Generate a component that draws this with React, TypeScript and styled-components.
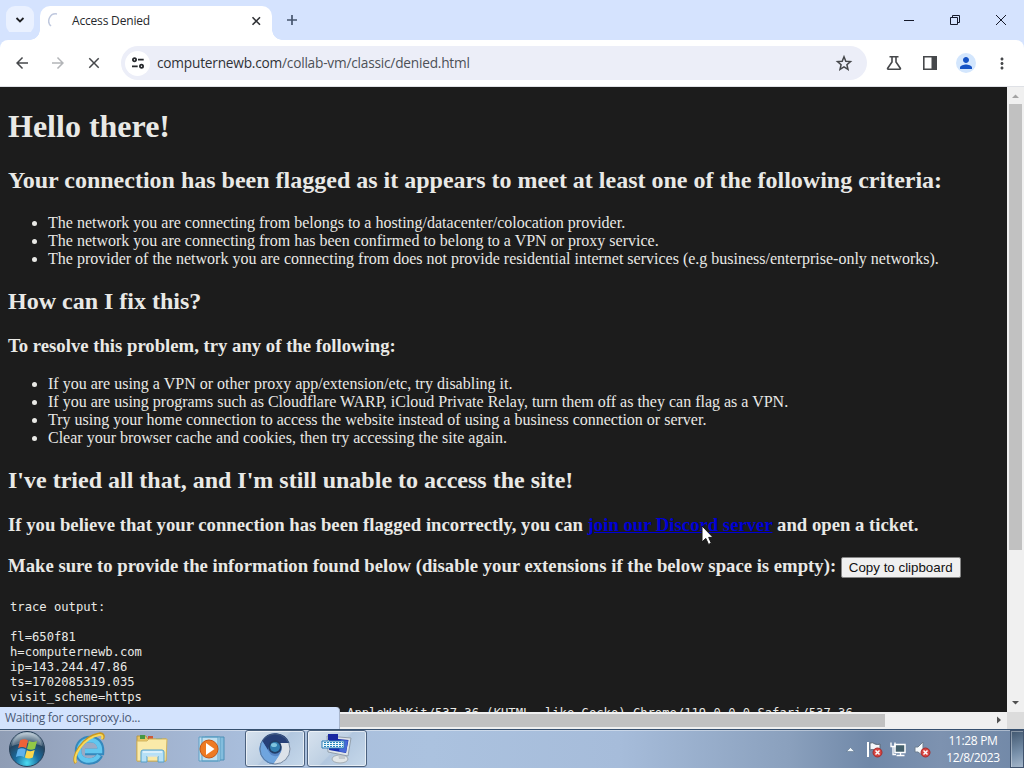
import { ReactNode } from 'react'
import { MdArrowBack, MdArrowForward, MdClose, MdMoreVert, MdPerson } from 'react-icons/md'
import styled, { createGlobalStyle } from 'styled-components'

const UI_FONT = `'Open Sans', 'Noto Sans', sans-serif`

const GlobalStyle = createGlobalStyle`
  body {
    margin: 0;
    overflow: hidden;
  }
  * {
    box-sizing: border-box;
  }
`

const Desktop = styled.div`
  position: relative;
  display: flex;
  flex-direction: column;
  width: 1024px;
  height: 768px;
  overflow: hidden;
  font-family: ${UI_FONT};
`

const TabStrip = styled.div`
  display: flex;
  height: 40px;
  flex: none;
  background: #d5e3fe;
`

const TabSearch = styled.div`
  display: flex;
  align-items: center;
  justify-content: center;
  width: 28px;
  height: 28px;
  margin: 6px 6px 0;
  border-radius: 9px;
  background: #eaf1ff;
`

const Tab = styled.div`
  position: relative;
  display: flex;
  align-items: center;
  width: 232px;
  height: 34px;
  margin-top: 6px;
  padding: 0 8px 4px 8px;
  border-radius: 10px 10px 0 0;
  background: #fff;

  &::before,
  &::after {
    content: '';
    position: absolute;
    bottom: 0;
    width: 10px;
    height: 10px;
  }
  &::before {
    left: -10px;
    background: radial-gradient(circle at 0 0, transparent 9.5px, #fff 10px);
  }
  &::after {
    right: -10px;
    background: radial-gradient(circle at 100% 0, transparent 9.5px, #fff 10px);
  }
`

const TabTitle = styled.span`
  flex: 1;
  margin-left: 8px;
  color: #26282c;
  font-size: 12px;
  letter-spacing: -0.18px;
  line-height: 18px;
`

const NewTab = styled.div`
  display: flex;
  flex: 1;
  padding: 12px 0 0 12px;
`

const WindowButtons = styled.div`
  display: flex;

  svg {
    width: 46px;
    height: 40px;
  }
`

const Toolbar = styled.div`
  display: flex;
  align-items: center;
  flex: none;
  height: 47px;
  padding: 0 13px;
  border-bottom: 1px solid #dfe1e6;
  border-radius: 8px 8px 0 0;
  background: #fff;
  box-shadow: 0 -8px 0 #d5e3fe;
  color: #46484b;
`

const ToolButton = styled.span<{ $space: number; $faded?: boolean }>`
  display: flex;
  width: 18px;
  margin-right: ${({ $space }) => $space}px;
  color: ${({ $faded }) => ($faded ? '#b3b5b8' : 'inherit')};
`

const AddressBar = styled.div`
  display: flex;
  align-items: center;
  width: 746px;
  height: 34px;
  margin-right: 18px;
  padding: 0 14px 0 4px;
  border-radius: 17px;
  background: #eceef8;
`

const SiteInfo = styled.span`
  display: flex;
  align-items: center;
  justify-content: center;
  width: 25px;
  height: 25px;
  border-radius: 50%;
  background: #fff;
`

const Url = styled.span`
  flex: 1;
  margin-left: 7px;
  color: #4d5157;
  font-size: 13.7px;
  line-height: 20px;
  letter-spacing: -0.22px;
  white-space: nowrap;

  b {
    color: #303236;
    font-weight: 400;
  }
`

const Avatar = styled.span`
  display: flex;
  align-items: center;
  justify-content: center;
  width: 20px;
  height: 20px;
  margin-right: 17px;
  border-radius: 50%;
  background: #d3e6fd;
  color: #1552c5;
`

const Viewport = styled.div`
  display: grid;
  grid-template-columns: 1007px 17px;
  grid-template-rows: 625px 17px;
  flex: none;
  height: 642px;
  background: #f0f0f0;
`

const Page = styled.main`
  padding: 0 8px;
  overflow: hidden;
  background: #1c1c1c;
  color: #e9e9e6;
  font: 16px/18px 'Liberation Serif', serif;
  white-space: nowrap;

  h1 {
    margin: 21px 0 22px;
    font-size: 32px;
    line-height: 37px;
  }
  h2 {
    margin: 20px 0;
    font-size: 24px;
    line-height: 27px;
  }
  h3 {
    margin: 20px 0 19px;
    font-size: 18.72px;
    line-height: 21px;
  }
  ul {
    margin: 16px 0;
    padding-left: 40px;
  }
  a {
    color: #0000d6;
    text-decoration: underline;
  }
`

const CopyButton = styled.button`
  height: 21px;
  padding: 1px 7px;
  border: 1px solid #858585;
  border-radius: 2px;
  background: #f0f0f0;
  color: #111;
  font: 13.33px/15px 'Liberation Sans', sans-serif;
  vertical-align: middle;
`

const Trace = styled.pre`
  margin: 0;
  padding: 3px 2px;
  font: 12.18px/15px 'DejaVu Sans Mono', monospace;
`

const UserAgent = styled.div`
  padding-top: 1px;
`

const VerticalBar = styled.div`
  display: flex;
  flex-direction: column;
  align-items: center;

  i {
    width: 13px;
    height: 446px;
    margin-bottom: auto;
    background: #c1c1c1;
  }
`

const HorizontalBar = styled.div`
  display: flex;
  align-items: center;

  i {
    width: 868px;
    height: 13px;
    margin: 0 auto 0 17px;
    background: #c1c1c1;
  }
`

const Corner = styled.div`
  background: #dcdcdc;
`

const StatusBubble = styled.div`
  position: absolute;
  top: 707px;
  left: 0;
  width: 340px;
  height: 22px;
  padding-left: 5px;
  border-right: 1px solid #a9b6cc;
  border-radius: 0 4px 0 0;
  background: #d3e3fd;
  color: #4a5974;
  font-size: 12px;
  letter-spacing: -0.28px;
  line-height: 21px;
`

const Pointer = styled.svg`
  position: absolute;
  top: 525px;
  left: 701px;
`

const Taskbar = styled.div`
  display: flex;
  flex: none;
  height: 39px;
  border-top: 1px solid #36506f;
  background: linear-gradient(
    90deg,
    #8f9db5 0,
    #9dadc8 110px,
    #a8bddb 240px,
    #abc2df 430px,
    #a6bcda 620px,
    #8aa0bd 790px,
    #7088a8 870px,
    #7d92b0 940px,
    #7188a7 1024px
  );
  box-shadow: inset 0 1px 0 rgba(255, 255, 255, 0.4);
`

const TaskItem = styled.div<{ $width: number; $open?: boolean }>`
  display: flex;
  align-items: center;
  justify-content: center;
  width: ${({ $width }) => $width}px;
  ${({ $open }) =>
    $open &&
    `
    margin: 0 1px 1px;
    border: 1px solid #4b617e;
    border-radius: 3px;
    box-shadow: inset 0 0 0 1px rgba(255, 255, 255, 0.6);
    background: linear-gradient(135deg, #d7e2ee, #bed0e3 48%, #b2c7df 50%, #c6d8ea);
  `}
`

const Tray = styled.div`
  display: flex;
  align-items: center;
  gap: 7px;
  margin-left: auto;
`

const Clock = styled.div`
  width: 58px;
  margin: 0 8px 0 6px;
  color: #fff;
  font-size: 12px;
  letter-spacing: -0.35px;
  line-height: 17px;
  text-align: center;
  white-space: nowrap;
`

const ShowDesktop = styled.div`
  width: 14px;
  border: 1px solid #40536d;
  background: linear-gradient(160deg, #41576f, #7890aa 60%, #a4b6ca);
  box-shadow: inset 1px 1px 0 rgba(255, 255, 255, 0.35);
`

const Arrow = ({ direction, color = '#505050' }: { direction: 'up' | 'down' | 'right'; color?: string }) => {
  const paths = { up: 'M5 11 8.5 7.5 12 11Z', down: 'M5 6h7l-3.500 3.500Z', right: 'M7 4.500v7l4-3.500Z' }
  return (
    <svg width="17" height="17" viewBox="0 0 17 17">
      <path d={paths[direction]} fill={color} />
    </svg>
  )
}

const StartOrb = () => (
  <svg width="38" height="38" viewBox="0 0 38 38">
    <defs>
      <radialGradient id="orb" cx=".5" cy=".9" r=".85">
        <stop offset="0" stopColor="#4bdcf2" />
        <stop offset=".4" stopColor="#1a6c9f" />
        <stop offset=".75" stopColor="#24445f" />
        <stop offset="1" stopColor="#a7bac8" />
      </radialGradient>
    </defs>
    <circle cx="19" cy="19" r="17.5" fill="url(#orb)" stroke="#294159" />
    <path d="M4 16C5 7 12 3 19 3s14 4 15 13c-9-4-20-4-30 0Z" fill="#fff" opacity=".25" />
    <path d="M12 10.500c3-1.800 5.500-1.500 8-.1l-1.900 7.800c-2.700-1.500-5.200-1.500-8 0Z" fill="#ed6339" />
    <path d="M21 11c2.700 1.300 5 1.300 8 0l-2 7.800c-2.900 1.400-5.300 1.200-8 0Z" fill="#93c846" />
    <path d="M9.800 19.500c2.900-1.600 5.300-1.500 8 0L16 27c-2.700-1.500-5.200-1.500-8.100 0Z" fill="#5fb2ec" />
    <path d="M18.800 20.200c2.800 1.300 5 1.200 7.900-.1l-1.900 7.400c-2.900 1.400-5.200 1.200-7.900 0Z" fill="#fbd64c" />
  </svg>
)

const ExplorerIcon = () => (
  <svg width="34" height="34" viewBox="0 0 34 34" fill="none">
    <path d="M28 23c-2 4-6 6.500-11 6.500C10 29.500 6 25 6 19c0-7 5-12 12-12 7.500 0 11.500 5 11 13H13" stroke="#3488bd" strokeWidth="6.500" />
    <path d="M27 23c-2 3.500-5.500 5.500-10 5.500-6.500 0-10-4-10-9.500C7 12.500 11.500 8 18 8c6.500 0 10 4.500 10 11H13" stroke="#62c6ef" strokeWidth="4.500" />
    <path d="M4 31C-1 26 10 5 27 2c5-1 5 3 3 5" stroke="#c99822" strokeWidth="3" />
    <path d="M4 30.500C0 25 11 6 27 3c4-.7 4 2 2.500 4" stroke="#f9d95a" strokeWidth="2" />
  </svg>
)

const FolderIcon = () => (
  <svg width="34" height="30" viewBox="0 0 34 30">
    <path d="M2 2h9l2 3h18v22H2Z" fill="#e9c665" stroke="#b69749" />
    <path d="M5 1h5v4H5Z" fill="#459745" />
    <path d="M13 2h5v4h-5Z" fill="#cb5939" />
    <path d="M21 4h6v3h-6Z" fill="#61a6c2" />
    <path d="M2 7h10l2-2h18l-1 22H2Z" fill="#faeaa9" stroke="#d2b560" />
    <path d="M6 28V18q0-2 2-2h19q2 0 2 2v10h-6v-6H12v6Z" fill="#b5e0f7" stroke="#55a0ca" />
    <path d="M12 22h11M8 18h19" stroke="#fff" />
  </svg>
)

const MediaIcon = () => (
  <svg width="28" height="28" viewBox="0 0 28 28">
    <path d="M7 2h19v23H7Z" fill="#83bddd" stroke="#4d8fb6" />
    <path d="M4 2h18v24H4ZM1 2h19v24H1Z" fill="#bfdff0" stroke="#5c9fc4" />
    <circle cx="11" cy="14" r="9" fill="#ee7a23" stroke="#c65716" />
    <path d="m8 8 8.500 6L8 20Z" fill="#fff" />
  </svg>
)

const ChromiumIcon = () => (
  <svg width="32" height="32" viewBox="0 0 32 32">
    <circle cx="16" cy="16" r="15.500" fill="#5685c5" />
    <path d="M3 7.500A15.500 15.500 0 0 1 30.500 10H16a7 7 0 0 0-7 7Z" fill="#263f77" />
    <path d="M30.500 10A15.500 15.500 0 0 1 14 31.300L22 19q2-5-2-9Z" fill="#dce2ea" />
    <path d="M3 7.500A15.500 15.500 0 0 0 14 31.300l7-10a7 7 0 0 1-11-2Z" fill="#6fa5df" />
    <circle cx="16" cy="14" r="6.700" fill="#213e68" />
    <circle cx="16" cy="14" r="5" fill="#327fb1" />
    <ellipse cx="15" cy="12" rx="3" ry="2" fill="#80c5df" />
    <circle cx="16" cy="16" r="15" fill="none" stroke="#4e6684" opacity=".7" />
  </svg>
)

const KeyboardIcon = () => (
  <svg width="32" height="32" viewBox="0 0 32 32">
    <ellipse cx="19" cy="26" rx="8" ry="4" fill="#e1e5e7" stroke="#a4adb4" />
    <path d="m17 21 7-1v6h-6Z" fill="#c3c9ce" />
    <path d="m6 3 24 2-3 18-20-4Z" fill="#dfe4e9" stroke="#929fac" />
    <path d="m8 5 19.500 2-2.500 13-17-3Z" fill="#1830ae" />
    <path d="m20 7 7 .5-2 12-7-1Z" fill="#4668d7" />
    <path d="M7 1h10v6H7Z" fill="#1827a1" />
    <path d="M1 8h22v7H1Z" fill="#e8f7fb" stroke="#2b7bb6" />
    <path d="M3 9.500h19M3 11.500h19M3 13.500h19" stroke="#2686bd" strokeDasharray="2 1" />
  </svg>
)

const ErrorMark = () => (
  <g>
    <circle cx="11.500" cy="11.500" r="4.500" fill="#d84541" stroke="#a42d2d" />
    <path d="m9.500 9.500 4 4m0-4-4 4" stroke="#fff" strokeWidth="1.500" />
  </g>
)

const TrayIcon = ({ children }: { children: ReactNode }) => (
  <svg width="17" height="17" viewBox="0 0 17 17" fill="none">
    {children}
  </svg>
)

const BrowserChrome = () => (
  <>
    <TabStrip>
      <TabSearch>
        <svg width="12" height="12" viewBox="0 0 12 12" fill="none" stroke="#202124" strokeWidth="1.800">
          <path d="m2.500 4 3.500 3.500L9.500 4" />
        </svg>
      </TabSearch>
      <Tab>
        <svg width="16" height="16" viewBox="0 0 16 16" fill="none" stroke="#bfc8de" strokeWidth="1.500">
          <path d="M3 13A7 7 0 0 1 9 1" />
        </svg>
        <TabTitle>Access Denied</TabTitle>
        <svg width="16" height="16" viewBox="0 0 16 16" stroke="#303236" strokeWidth="1.600">
          <path d="m4.500 4.300 7.500 7.500m0-7.500-7.500 7.500" />
        </svg>
      </Tab>
      <NewTab>
        <svg width="16" height="16" viewBox="0 0 16 16" stroke="#46556e" strokeWidth="1.700">
          <path d="M8 3v10M3 8h10" />
        </svg>
      </NewTab>
      <WindowButtons>
        <svg viewBox="0 0 46 40" stroke="#15192a">
          <path d="M18 20.500h10" />
        </svg>
        <svg viewBox="0 0 46 40" stroke="#15192a" fill="none">
          <path d="M18.500 17.500h7v7h-7zM20.500 17.500v-2h7v7h-2" />
        </svg>
        <svg viewBox="0 0 46 40" stroke="#15192a">
          <path d="m18 15 10 10m0-10L18 25" />
        </svg>
      </WindowButtons>
    </TabStrip>
    <Toolbar>
      <ToolButton $space={18}>
        <MdArrowBack size={18} />
      </ToolButton>
      <ToolButton $space={18} $faded>
        <MdArrowForward size={18} />
      </ToolButton>
      <ToolButton $space={18}>
        <MdClose size={18} />
      </ToolButton>
      <AddressBar>
        <SiteInfo>
          <svg width="14" height="12" viewBox="0 0 14 12" fill="none" stroke="#26282c" strokeWidth="1.800">
            <circle cx="3.500" cy="2.700" r="1.600" />
            <circle cx="10.500" cy="9.300" r="1.600" />
            <path d="M7 2.700h5.700M1 9.300h5.700" />
          </svg>
        </SiteInfo>
        <Url>
          <b>computernewb.com</b>/collab-vm/classic/denied.html
        </Url>
        <svg width="18" height="18" viewBox="0 0 18 18" fill="none" stroke="#46484b" strokeWidth="1.500">
          <path d="m9 2.800 1.800 4.400 4.700.4-3.600 3.100 1.100 4.600L9 12.800l-4 2.500 1.100-4.600-3.600-3.100 4.700-.4Z" />
        </svg>
      </AddressBar>
      <ToolButton $space={18}>
        <svg width="18" height="18" viewBox="0 0 18 18" fill="none" stroke="#46484b" strokeWidth="1.600">
          <path d="M4.500 2.800h9M7 3v5l-4.300 6.200q-.5 1 .5 1h11.600q1 0 .5-1L11 8V3" />
        </svg>
      </ToolButton>
      <ToolButton $space={17}>
        <svg width="18" height="18" viewBox="0 0 18 18" fill="none">
          <path d="M2.800 2.800h12.400v12.400H2.800Z" stroke="#46484b" strokeWidth="1.600" />
          <path d="M10.500 3H15v12h-4.500Z" fill="#46484b" />
        </svg>
      </ToolButton>
      <Avatar>
        <MdPerson size={18} />
      </Avatar>
      <ToolButton $space={0}>
        <MdMoreVert size={19} />
      </ToolButton>
    </Toolbar>
  </>
)

const DeniedPage = () => (
  <Page>
    <h1>Hello there!</h1>
    <h2>Your connection has been flagged as it appears to meet at least one of the following criteria:</h2>
    <ul>
      <li>The network you are connecting from belongs to a hosting/datacenter/colocation provider.</li>
      <li>The network you are connecting from has been confirmed to belong to a VPN or proxy service.</li>
      <li>
        The provider of the network you are connecting from does not provide residential internet services (e.g
        business/enterprise-only networks).
      </li>
    </ul>
    <h2>How can I fix this?</h2>
    <h3>To resolve this problem, try any of the following:</h3>
    <ul>
      <li>If you are using a VPN or other proxy app/extension/etc, try disabling it.</li>
      <li>If you are using programs such as Cloudflare WARP, iCloud Private Relay, turn them off as they can flag as a VPN.</li>
      <li>Try using your home connection to access the website instead of using a business connection or server.</li>
      <li>Clear your browser cache and cookies, then try accessing the site again.</li>
    </ul>
    <h2>I've tried all that, and I'm still unable to access the site!</h2>
    <h3>
      If you believe that your connection has been flagged incorrectly, you can <a>join our Discord server</a> and open a
      ticket.
    </h3>
    <h3>
      Make sure to provide the information found below (disable your extensions if the below space is empty):{' '}
      <CopyButton>Copy to clipboard</CopyButton>
    </h3>
    <Trace>
      {`trace output:

fl=650f81
h=computernewb.com
ip=143.244.47.86
ts=1702085319.035
visit_scheme=https`}
      <UserAgent>
        uag=Mozilla/5.0 (Windows NT 10.0; Win64; x64) AppleWebKit/537.36 (KHTML, like Gecko) Chrome/119.0.0.0 Safari/537.36
      </UserAgent>
    </Trace>
  </Page>
)

const WindowsTaskbar = () => (
  <Taskbar>
    <TaskItem $width={54}>
      <StartOrb />
    </TaskItem>
    <TaskItem $width={70}>
      <ExplorerIcon />
    </TaskItem>
    <TaskItem $width={55}>
      <FolderIcon />
    </TaskItem>
    <TaskItem $width={65}>
      <MediaIcon />
    </TaskItem>
    <TaskItem $width={60} $open>
      <ChromiumIcon />
    </TaskItem>
    <TaskItem $width={60} $open>
      <KeyboardIcon />
    </TaskItem>
    <Tray>
      <TrayIcon>
        <path d="m4.500 10.500 4-4 4 4Z" fill="#eef5fa" stroke="#536a83" strokeWidth=".5" />
      </TrayIcon>
      <TrayIcon>
        <path d="M2 1v15" stroke="#fff" strokeWidth="2" />
        <path d="M4 2q3-1 5 1 3 1 5 0v7q-3 1-5-1-3-1-5 0Z" fill="#f5f7fa" stroke="#5b6877" />
        <ErrorMark />
      </TrayIcon>
      <TrayIcon>
        <path d="M5 3.500h10v8H5Z" fill="#44606c" stroke="#fff" strokeWidth="1.500" />
        <path d="M6.500 14.500h8M10.500 12v2M1 1.500v4h4v-4M3 5.500v8h3" stroke="#fff" strokeWidth="1.300" />
      </TrayIcon>
      <TrayIcon>
        <path d="M1 6h3l5-5v14l-5-4H1Z" fill="#f6fafc" stroke="#6f7f90" />
        <ErrorMark />
      </TrayIcon>
      <Clock>
        11:28 PM
        <br />
        12/8/2023
      </Clock>
    </Tray>
    <ShowDesktop />
  </Taskbar>
)

const App = () => (
  <>
    <GlobalStyle />
    <Desktop>
      <BrowserChrome />
      <Viewport>
        <DeniedPage />
        <VerticalBar>
          <Arrow direction="up" color="#a3a3a3" />
          <i />
          <Arrow direction="down" />
        </VerticalBar>
        <HorizontalBar>
          <i />
          <Arrow direction="right" />
        </HorizontalBar>
        <Corner />
      </Viewport>
      <WindowsTaskbar />
      <StatusBubble>Waiting for corsproxy.io...</StatusBubble>
      <Pointer width="13" height="21" viewBox="0 0 13 21">
        <path d="M1 1v16l3.800-3.600 2.700 6 2.800-1.200-2.600-5.800H12Z" fill="#fff" stroke="#171717" />
      </Pointer>
    </Desktop>
  </>
)

export default App
